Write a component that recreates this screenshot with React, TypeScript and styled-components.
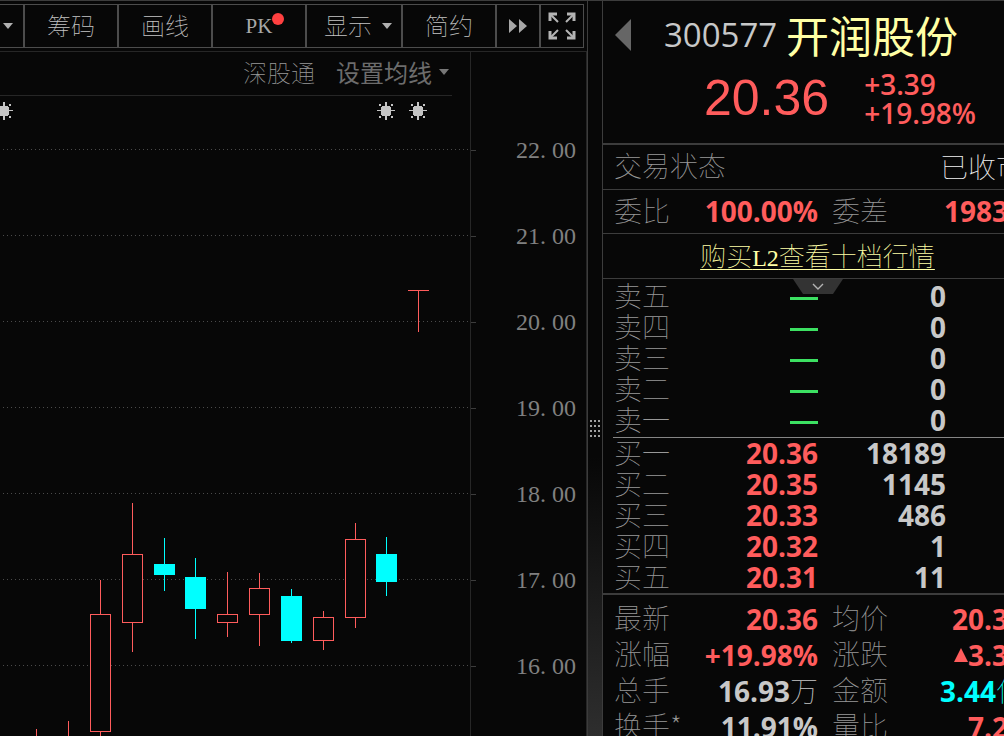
import React from "react";
import styled, { createGlobalStyle, css } from "styled-components";

const song = `"Noto Sans CJK SC", sans-serif`;
const numeric = `"Open Sans", "Noto Sans CJK SC", sans-serif`;

const color = {
  bg: "#070707",
  line: "#3c3c3c",
  faint: "#262626",
  label: "#989898",
  axis: "#808080",
  soft: "#c8c8c8",
  bright: "#f0f0f0",
  red: "#ff5c5c",
  green: "#3ce062",
  cyan: "#00ffff",
  yellow: "#ffffa5",
};

const Global = createGlobalStyle`
  * { box-sizing: border-box; }
  body { margin: 0; background: ${color.bg}; overflow: hidden; }
  button { margin: 0; padding: 0; border: 0; background: none; font: inherit; color: inherit; cursor: pointer; }
`;

const Shell = styled.main`
  display: grid;
  grid-template-columns: minmax(0, 1fr) 16px minmax(0, 401px);
  height: 100vh;
  overflow: hidden;
  border-top: 1px solid ${color.line};
  background: ${color.bg};
  color: ${color.soft};
  font-family: ${song};
  font-weight: 100;
`;

const ChartPane = styled.section`
  display: flex;
  flex-direction: column;
  min-width: 0;
  overflow: hidden;
`;

const Toolbar = styled.nav`
  display: flex;
  justify-content: flex-end;
  height: 50px;
  padding: 3px 3px 3px 0;
`;

const Tool = styled.button<{ $w: number; $menu?: boolean; $end?: boolean }>`
  display: flex;
  flex: none;
  align-items: center;
  justify-content: ${(p) => (p.$end ? "flex-end" : "center")};
  gap: 10px;
  width: ${(p) => p.$w}px;
  height: 44px;
  border: 1px solid #4c4c4c;
  border-width: 1px 2px 1px 0;
  color: #c4c4c4;
  font-size: 24px;
  line-height: 32px;
  ${(p) => p.$menu && css`padding-left: 8px;`}
  ${(p) => p.$end && css`padding-right: 10px;`}

  &:last-child { border-right-width: 1px; }
`;

const ToolText = styled.span`
  padding-bottom: 2px;
`;

const Latin = styled.span`
  position: relative;
  color: #a8a8a8;
  font-family: "Liberation Serif", serif;
  font-weight: 400;
  font-size: 21px;
`;

const Badge = styled.i`
  position: absolute;
  left: 100%;
  top: 3px;
  width: 12px;
  height: 12px;
  border-radius: 50%;
  background: #ff4040;
`;

const ChartBody = styled.div`
  display: flex;
  flex: 1;
  min-height: 0;
  border-top: 1px solid ${color.faint};
  border-right: 1px solid ${color.faint};
`;

const Plot = styled.div`
  display: flex;
  flex: 1;
  flex-direction: column;
  min-width: 0;
  overflow: hidden;
  border-right: 1px solid ${color.faint};
`;

const PlotHeader = styled.header`
  display: flex;
  align-items: center;
  justify-content: flex-end;
  gap: 21px;
  height: 44px;
  margin-right: 18px;
  padding: 0 3px 4px 0;
  border-bottom: 1px solid ${color.faint};
  color: ${color.label};
  font-size: 24px;
  line-height: 32px;
  white-space: nowrap;
`;

const AverageButton = styled.button`
  display: flex;
  align-items: center;
  gap: 7px;
  font-weight: 400;
  color: #6c6c6c;
`;

const Canvas = styled.div`
  display: flex;
  flex: 1;
  justify-content: flex-end;
  min-height: 0;
  overflow: hidden;

  svg { flex: none; }
`;

const Axis = styled.ol`
  width: 115px;
  margin: 0;
  padding: 55px 10px 0 0;
  list-style: none;
`;

const AxisRow = styled.li`
  display: flex;
  align-items: center;
  justify-content: space-between;
  height: 86px;
  color: ${color.axis};
  font: 400 24px/32px "Liberation Serif", serif;

  &::before {
    width: 5px;
    height: 1px;
    background: ${color.line};
    content: "";
  }
`;

const Point = styled.span`
  display: inline-block;
  width: 12px;
`;

const Splitter = styled.div`
  display: flex;
  align-items: center;
  justify-content: center;
  padding-top: 120px;
  border: 1px solid ${color.line};
  border-width: 0 1px;
  background: linear-gradient(${color.bg} 62%, #2e2e2e);
`;

const Quote = styled.aside`
  min-width: 0;
  overflow: hidden;
`;

const QuoteHeader = styled.header`
  display: grid;
  grid-template-rows: 68px 58px;
  height: 144px;
  border-bottom: 2px solid ${color.line};
`;

const TitleRow = styled.div`
  display: flex;
  align-items: center;
  padding-left: 12px;
  white-space: nowrap;
`;

const Back = styled.button`
  display: flex;
  width: 49px;
`;

const Code = styled.span`
  width: 122px;
  color: ${color.soft};
  font: 400 33px/48px ${numeric};
`;

const Name = styled.h1`
  margin: 0;
  padding-bottom: 2px;
  color: ${color.yellow};
  font: 400 43px/64px ${song};
`;

const PriceRow = styled.div`
  display: flex;
  align-items: center;
  gap: 35px;
  padding-left: 101px;
  color: ${color.red};
  white-space: nowrap;
`;

const Price = styled.strong`
  font: 400 50px/56px "Liberation Sans", sans-serif;
`;

const Change = styled.div`
  display: flex;
  flex-direction: column;
  padding-top: 2px;
  font: 600 28px/29px ${numeric};
`;

const Strip = styled.div<{ $h: number; $center?: boolean }>`
  display: flex;
  align-items: center;
  height: ${(p) => p.$h}px;
  border-bottom: 1px solid ${color.line};
  ${(p) => p.$center && css`justify-content: center; padding-left: 28px;`}
`;

const Fields = styled.dl<{ $row: number }>`
  display: grid;
  grid-template-columns: 93px 111px 14px 81px 111px;
  grid-auto-rows: ${(p) => p.$row}px;
  align-items: center;
  flex: none;
  margin: 0;
  padding-left: 11px;
`;

const Label = styled.dt<{ $second?: boolean }>`
  grid-column: ${(p) => (p.$second ? "4" : "1")};
  padding-bottom: 3px;
  color: ${color.label};
  font: 100 28px/31px ${song};
  white-space: nowrap;
`;

const Value = styled.dd<{ $tone: string; $second?: boolean }>`
  grid-column: ${(p) => (p.$second ? "5" : "2")};
  display: flex;
  align-items: center;
  justify-content: flex-end;
  margin: 0;
  color: ${(p) => p.$tone};
  font: 700 28px/31px ${numeric};
  white-space: nowrap;
`;

const Unit = styled.span`
  padding-bottom: 2px;
  font: 100 28px/31px ${song};
`;

const UpgradeLink = styled.a`
  color: ${color.yellow};
  font-size: 26px;
  line-height: 32px;
  text-decoration: underline;
  text-decoration-thickness: 1px;
  text-underline-offset: 3px;
`;

const LinkLatin = styled.span`
  font: 400 24px/32px "Liberation Serif", serif;
`;

const Book = styled.section`
  position: relative;
  border-bottom: 2px solid ${color.line};
`;

const Collapse = styled.button`
  position: absolute;
  top: 0;
  left: 190px;
  display: flex;
`;

const Side = styled.div<{ $ruled?: boolean }>`
  margin-left: 10px;
  padding: ${(p) => (p.$ruled ? "0 0 0 1px" : "2px 0 1px 1px")};
  ${(p) => p.$ruled && css`border-top: 1px solid #858585;`}
`;

const BookTable = styled.table`
  width: 100%;
  border-collapse: collapse;
  table-layout: fixed;
`;

const Level = styled.th`
  width: 93px;
  height: 31px;
  padding: 0;
  color: ${color.label};
  font: 100 28px/29px ${song};
  text-align: left;
  vertical-align: top;
`;

const Cell = styled.td<{ $tone: string; $w: number }>`
  width: ${(p) => p.$w}px;
  height: 31px;
  padding: 0;
  color: ${(p) => p.$tone};
  font: 700 28px/31px ${numeric};
  text-align: right;
`;

const Dash = styled.span`
  display: block;
  width: 28px;
  height: 3px;
  margin: 4px 0 0 auto;
  background: ${color.green};
`;

const Stats = styled.section`
  padding-top: 6px;
`;

const Caret = ({ fill = "#b0b0b0" }: { fill?: string }) => (
  <svg width="10" height="6" viewBox="0 0 10 6" aria-hidden="true">
    <path d="M0 0h10L5 6z" fill={fill} />
  </svg>
);

const plotWidth = 470;
const gridY = [149, 235, 321, 407, 493, 579, 665];

type Candle = { x: number; high: number; top: number; bottom: number; low: number; up: boolean };
const candles: Candle[] = [
  { x: 100, high: 580, top: 614, bottom: 731, low: 740, up: true },
  { x: 132, high: 503, top: 554, bottom: 622, low: 652, up: true },
  { x: 164, high: 538, top: 564, bottom: 574, low: 591, up: false },
  { x: 195, high: 558, top: 577, bottom: 608, low: 639, up: false },
  { x: 227, high: 572, top: 614, bottom: 622, low: 637, up: true },
  { x: 259, high: 573, top: 588, bottom: 614, low: 646, up: true },
  { x: 291, high: 589, top: 596, bottom: 640, low: 643, up: false },
  { x: 323, high: 611, top: 617, bottom: 640, low: 650, up: true },
  { x: 355, high: 523, top: 539, bottom: 617, low: 628, up: true },
  { x: 386, high: 537, top: 554, bottom: 581, low: 596, up: false },
];

const Spark = ({ x }: { x: number }) => (
  <g fill="#c4c4c4" transform={`translate(${x} 111)`} shapeRendering="crispEdges">
    <path d="M-4-5h8v1h1v8h-1v1h-8v-1h-1v-8h1z" />
    <path d="M-1-9h2V9h-2zM-9-1H9v1H-9z" />
    <path d="M-7-7h2v2h-2zM5-7h2v2h-2zM-7 5h2v2h-2zM5 5h2v2h-2z" />
  </g>
);

const KLine = () => (
  <svg width={plotWidth} height="640" viewBox="0 96 470 640" role="img" aria-label="K线图">
    <g stroke="#4a4a4a" strokeDasharray="1 3" shapeRendering="crispEdges">
      {gridY.map((y) => (
        <path key={y} d={`M3 ${y + 0.5}H${plotWidth}`} />
      ))}
    </g>
    <Spark x={4} />
    <Spark x={386} />
    <Spark x={418} />
    <g shapeRendering="crispEdges" strokeWidth="1">
      <path d="M36.5 729V736M68.5 721V736M418.5 290V332M408 290.5H429" stroke={color.red} />
      {candles.map((c) => {
        const tone = c.up ? color.red : color.cyan;
        return (
          <g key={c.x} stroke={tone}>
            <path d={`M${c.x + 0.5} ${c.high}V${c.top}M${c.x + 0.5} ${c.bottom + 1}V${c.low}`} />
            <rect
              x={c.x - 9.5}
              y={c.top + 0.5}
              width="20"
              height={c.bottom - c.top}
              fill={c.up ? color.bg : tone}
            />
          </g>
        );
      })}
    </g>
  </svg>
);

const sells = ["卖五", "卖四", "卖三", "卖二", "卖一"];
const buys = [
  ["买一", "20.36", "18189"],
  ["买二", "20.35", "1145"],
  ["买三", "20.33", "486"],
  ["买四", "20.32", "1"],
  ["买五", "20.31", "11"],
];

export default function App() {
  return (
    <>
      <Global />
      <Shell>
        <ChartPane>
          <Toolbar aria-label="图表工具">
            <Tool $w={94} $end aria-label="更多周期">
              <Caret />
            </Tool>
            <Tool $w={94}>
              <ToolText>筹码</ToolText>
            </Tool>
            <Tool $w={94}>
              <ToolText>画线</ToolText>
            </Tool>
            <Tool $w={94}>
              <Latin>
                PK
                <Badge />
              </Latin>
            </Tool>
            <Tool $w={96} $menu>
              <ToolText>显示</ToolText>
              <Caret />
            </Tool>
            <Tool $w={94}>
              <ToolText>简约</ToolText>
            </Tool>
            <Tool $w={44} aria-label="展开">
              <svg width="18" height="14" viewBox="0 0 18 14" fill="#a8a8a8">
                <path d="M0 0l8 7-8 7zM10 0l8 7-8 7z" />
              </svg>
            </Tool>
            <Tool $w={43} aria-label="全屏">
              <svg width="28" height="28" viewBox="0 0 28 28" fill="none" stroke="#b4b4b4" strokeWidth="2">
                <path d="M2 9V2h7M19 2h7v7M26 19v7h-7M9 26H2v-7" strokeWidth="3" />
                <path d="M3 3l7 7M25 3l-7 7M25 25l-7-7M3 25l7-7" />
              </svg>
            </Tool>
          </Toolbar>
          <ChartBody>
            <Plot>
              <PlotHeader>
                <span>深股通</span>
                <AverageButton>
                  设置均线
                  <Caret fill="#777777" />
                </AverageButton>
              </PlotHeader>
              <Canvas>
                <KLine />
              </Canvas>
            </Plot>
            <Axis>
              {[22, 21, 20, 19, 18, 17, 16].map((n) => (
                <AxisRow key={n}>
                  <span>
                    {n}
                    <Point>.</Point>00
                  </span>
                </AxisRow>
              ))}
            </Axis>
          </ChartBody>
        </ChartPane>

        <Splitter>
          <svg width="10" height="17" viewBox="0 0 10 17" fill="#a0a0a0" shapeRendering="crispEdges">
            {[0, 5, 10, 15].map((y) =>
              [0, 4, 8].map((x) => <rect key={`${x}-${y}`} x={x} y={y} width="2" height="2" />),
            )}
          </svg>
        </Splitter>

        <Quote>
          <QuoteHeader>
            <TitleRow>
              <Back aria-label="上一只">
                <svg width="16" height="32" viewBox="0 0 16 32">
                  <path d="M16 0v32L0 16z" fill="#666666" />
                </svg>
              </Back>
              <Code>300577</Code>
              <Name>开润股份</Name>
            </TitleRow>
            <PriceRow>
              <Price>20.36</Price>
              <Change>
                <span>+3.39</span>
                <span>+19.98%</span>
              </Change>
            </PriceRow>
          </QuoteHeader>

          <Strip $h={45}>
            <Fields $row={44}>
              <Label>交易状态</Label>
              <Value $second $tone={color.bright}>
                <Unit>已收市</Unit>
              </Value>
            </Fields>
          </Strip>
          <Strip $h={44}>
            <Fields $row={43}>
              <Label>委比</Label>
              <Value $tone={color.red}>100.00%</Value>
              <Label $second>委差</Label>
              <Value $second $tone={color.red}>19832</Value>
            </Fields>
          </Strip>
          <Strip $h={45} $center>
            <UpgradeLink href="#l2">
              购买<LinkLatin>L2</LinkLatin>查看十档行情
            </UpgradeLink>
          </Strip>

          <Book>
            <Side>
              <BookTable>
                <tbody>
                  {sells.map((name) => (
                    <tr key={name}>
                      <Level scope="row">{name}</Level>
                      <Cell $w={111} $tone={color.green}>
                        <Dash />
                      </Cell>
                      <Cell $w={128} $tone={color.soft}>0</Cell>
                      <td />
                    </tr>
                  ))}
                </tbody>
              </BookTable>
            </Side>
            <Side $ruled>
              <BookTable>
                <tbody>
                  {buys.map(([name, price, volume]) => (
                    <tr key={name}>
                      <Level scope="row">{name}</Level>
                      <Cell $w={111} $tone={color.red}>{price}</Cell>
                      <Cell $w={128} $tone={color.soft}>{volume}</Cell>
                      <td />
                    </tr>
                  ))}
                </tbody>
              </BookTable>
            </Side>
            <Collapse aria-label="收起">
              <svg width="50" height="15" viewBox="0 0 50 15">
                <path d="M0 0h50L40 15H10z" fill="#333333" />
                <path d="M20 5l5 5 5-5" fill="none" stroke="#b4b4b4" strokeWidth="1.4" />
              </svg>
            </Collapse>
          </Book>

          <Stats>
            <Fields $row={36}>
              <Label>最新</Label>
              <Value $tone={color.red}>20.36</Value>
              <Label $second>均价</Label>
              <Value $second $tone={color.red}>20.32</Value>

              <Label>涨幅</Label>
              <Value $tone={color.red}>+19.98%</Value>
              <Label $second>涨跌</Label>
              <Value $second $tone={color.red}>
                <svg width="14" height="14" viewBox="0 0 14 14">
                  <path d="M7 0l7 14H0z" fill={color.red} />
                </svg>
                3.39
              </Value>

              <Label>总手</Label>
              <Value $tone={color.soft}>
                16.93<Unit>万</Unit>
              </Value>
              <Label $second>金额</Label>
              <Value $second $tone={color.cyan}>
                3.44<Unit>亿</Unit>
              </Value>

              <Label>换手*</Label>
              <Value $tone={color.soft}>11.91%</Value>
              <Label $second>量比</Label>
              <Value $second $tone={color.red}>7.20</Value>
            </Fields>
          </Stats>
        </Quote>
      </Shell>
    </>
  );
}
